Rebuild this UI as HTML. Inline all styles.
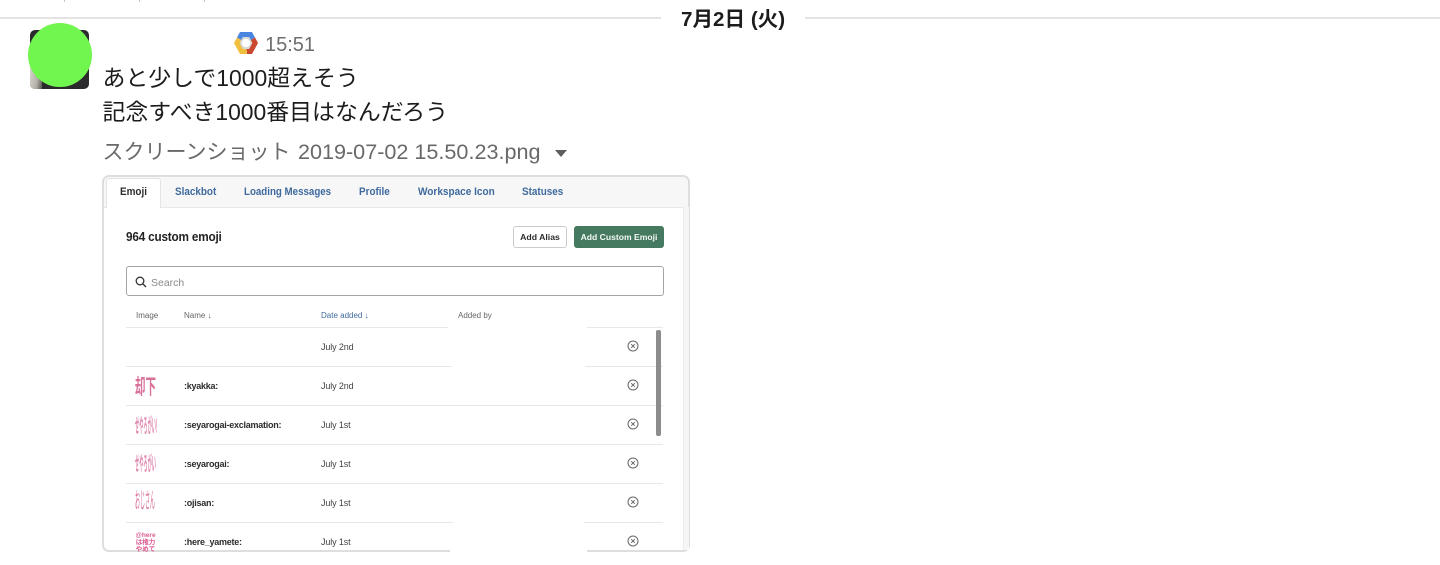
<!DOCTYPE html>
<html lang="ja"><head><meta charset="utf-8"><title>Slack message</title>
<style>
html,body{margin:0;padding:0;background:#fff}
#p{position:relative;width:1440px;height:565px;overflow:hidden;background:#fff;font-family:"Liberation Sans","Noto Sans CJK JP",sans-serif;color:#1d1c1d}
#p div{position:absolute;white-space:nowrap}
#s{left:0;top:0;width:1440px;height:565px;filter:blur(.3px)}
.l{height:1px;background:#e8e8e8}
.tab{top:185px;font-size:11px;line-height:15px;font-weight:bold;color:#3f6a9d;transform:scaleX(.9);transform-origin:0 0}
.t{font-size:8px;line-height:12px;color:#666}
.n{font-size:9px;line-height:12px;font-weight:bold;color:#2c2c2c;left:184px;letter-spacing:-.25px}
.d{font-size:9px;line-height:12px;color:#444;left:321px;letter-spacing:-.12px}
.e{left:135px;color:#d9709a;transform-origin:0 0;line-height:1}
.k{width:1px;height:2px;top:0;background:#c4c4c4}
</style></head><body>
<div id="p">
<div class="k" style="left:64px"></div><div class="k" style="left:139px"></div><div class="k" style="left:204px"></div>
<div style="left:0;top:17px;width:661px;height:2px;background:#e4e4e4"></div>
<div style="left:805px;top:17px;width:635px;height:2px;background:#e4e4e4"></div>
<div style="left:681px;top:6px;font-size:20.600px;line-height:27px;font-weight:bold;color:#1d1c1d">7月2日 (火)</div>
<div style="left:30px;top:30px;width:59px;height:59px;border-radius:5px;background:#2b2b2d"></div>
<div style="left:30px;top:66px;width:12px;height:23px;border-radius:0 0 0 5px;background:linear-gradient(100deg,#d8d6cf 0,#b4b1a8 60%,#55544f 100%)"></div>
<div style="left:27.500px;top:22.500px;width:64.500px;height:64.500px;border-radius:50%;background:#71f64f"></div>
<svg style="position:absolute;left:234px;top:32px" width="24" height="22" viewBox="0 0 24 22">
<path d="M6 0H18L21 5.500 12 11 3 5.500Z" fill="#4a86e0"/>
<path d="M21 5.500L24 11 18 22H13L12 11Z" fill="#c9482f"/>
<path d="M3 5.500L0 11 6 22H13L12 11Z" fill="#f0bf3e"/>
<path d="M8.800 5H15.200L18.400 11 15.200 17H8.800L5.600 11Z" fill="#d8d8d8"/>
<circle cx="12" cy="11" r="4.200" fill="#fff"/>
</svg>
<div style="left:265px;top:33px;font-size:20px;line-height:25px;color:#6f6e6f">15:51</div>
<div style="left:102.500px;top:61px;font-size:22.900px;line-height:34px;color:#1d1c1d">あと少しで1000超えそう<br>記念すべき1000番目はなんだろう</div>
<div style="left:102.500px;top:137px;font-size:21.600px;line-height:30px;color:#6a696a"><span style="font-size:21px;margin-right:1.500px">スクリーンショット</span> 2019-07-02 15.50.23.png</div>
<svg style="position:absolute;left:555px;top:150px" width="12" height="8"><path d="M0 0H12L6 7Z" fill="#5f5e5f"/></svg>

<div id="s">
<div style="left:102px;top:175px;width:584px;height:373px;border:2px solid #dedede;border-radius:7px;background:#fff;overflow:hidden"></div>
<div style="left:104px;top:177px;width:584px;height:30px;background:#f7f7f7;border-radius:5px 5px 0 0"></div>
<div style="left:104px;top:207px;width:580px;height:1px;background:#e8e8e8"></div>
<div style="left:683px;top:207px;width:5px;height:343px;background:#f6f6f6;border-left:1px solid #ececec"></div>
<div style="left:106px;top:178px;width:55px;height:30px;background:#fff;border:1px solid #e4e4e4;border-bottom:0;border-radius:3px 3px 0 0;box-sizing:border-box"></div>
<div class="tab" style="left:120px;color:#2c2c2c">Emoji</div>
<div class="tab" style="left:175px">Slackbot</div>
<div class="tab" style="left:244px;transform:scaleX(.885)">Loading Messages</div>
<div class="tab" style="left:359px">Profile</div>
<div class="tab" style="left:418px;transform:scaleX(.912)">Workspace Icon</div>
<div class="tab" style="left:522px">Statuses</div>
<div style="left:126px;top:229px;font-size:12.500px;line-height:16px;font-weight:bold;color:#222;letter-spacing:-.2px;transform:scaleX(.94);transform-origin:0 0">964 custom emoji</div>
<div style="left:513px;top:226px;width:54px;height:22px;box-sizing:border-box;border:1px solid #ccc;border-radius:3px;background:#fff;font-size:8.700px;line-height:21px;font-weight:bold;text-align:center;color:#2c2c2c">Add Alias</div>
<div style="left:574px;top:226px;width:90px;height:22px;border-radius:3px;background:#457a60;font-size:8.600px;line-height:23px;font-weight:bold;text-align:center;color:#f4f8f5">Add Custom Emoji</div>
<div style="left:126px;top:266px;width:538px;height:30px;box-sizing:border-box;border:1px solid #a5a5a5;border-radius:3px;background:#fff"></div>
<svg style="position:absolute;left:135px;top:276px" width="12" height="12" viewBox="0 0 12 12" fill="none" stroke="#333" stroke-width="1.300"><circle cx="5" cy="5" r="3.800"/><path d="M8 8L11 11"/></svg>
<div style="left:151px;top:276px;font-size:10.500px;line-height:14px;color:#8a8a8a">Search</div>
<div class="t" style="left:136px;top:310px">Image</div>
<div class="t" style="left:184px;top:310px">Name ↓</div>
<div class="t" style="left:321px;top:310px;color:#3f6a9d">Date added ↓</div>
<div class="t" style="left:458px;top:310px">Added by</div>

<div class="l" style="left:126px;top:327px;width:322px"></div><div class="l" style="left:587px;top:327px;width:76px"></div>
<div class="l" style="left:126px;top:366px;width:326px"></div><div class="l" style="left:585px;top:366px;width:78px"></div>
<div class="l" style="left:126px;top:405px;width:537px"></div>
<div class="l" style="left:126px;top:444px;width:537px"></div>
<div class="l" style="left:126px;top:483px;width:537px"></div>
<div class="l" style="left:126px;top:522px;width:327px"></div><div class="l" style="left:584px;top:522px;width:79px"></div>

<div class="e" style="top:378px;font-size:10.500px;transform:scale(1,2);font-weight:bold">却下</div>
<div class="e" style="top:418px;font-size:4.200px;transform:scale(1,4.800);color:#e08ab0;font-weight:bold">せやろがい!</div>
<div class="e" style="top:456px;font-size:4.200px;transform:scale(1,4.800);color:#e08ab0;font-weight:bold">せやろがい</div>
<div class="e" style="top:495px;font-size:5px;transform:scale(1,4.400)">おじさん</div>
<div class="e" style="top:532px;left:135.500px;font-size:6.500px;line-height:7px;color:#dc5a90;font-weight:bold;text-align:center">@here<br>は権力<br>やめて</div>

<div class="n" style="top:380px">:kyakka:</div>
<div class="n" style="top:419px">:seyarogai-exclamation:</div>
<div class="n" style="top:458px">:seyarogai:</div>
<div class="n" style="top:497px">:ojisan:</div>
<div class="n" style="top:536px">:here_yamete:</div>
<div class="d" style="top:341px">July 2nd</div>
<div class="d" style="top:380px">July 2nd</div>
<div class="d" style="top:419px">July 1st</div>
<div class="d" style="top:458px">July 1st</div>
<div class="d" style="top:497px">July 1st</div>
<div class="d" style="top:536px">July 1st</div>

<svg style="position:absolute;left:627px;top:340px" width="12" height="208" viewBox="0 0 12 208" fill="none" stroke="#666" stroke-width="1">
<g><circle cx="6" cy="6" r="5"/><path d="M4.200 4.200L7.800 7.800M7.800 4.200L4.200 7.800"/></g>
<g transform="translate(0,39)"><circle cx="6" cy="6" r="5"/><path d="M4.200 4.200L7.800 7.800M7.800 4.200L4.200 7.800"/></g>
<g transform="translate(0,78)"><circle cx="6" cy="6" r="5"/><path d="M4.200 4.200L7.800 7.800M7.800 4.200L4.200 7.800"/></g>
<g transform="translate(0,117)"><circle cx="6" cy="6" r="5"/><path d="M4.200 4.200L7.800 7.800M7.800 4.200L4.200 7.800"/></g>
<g transform="translate(0,156)"><circle cx="6" cy="6" r="5"/><path d="M4.200 4.200L7.800 7.800M7.800 4.200L4.200 7.800"/></g>
<g transform="translate(0,195)"><circle cx="6" cy="6" r="5"/><path d="M4.200 4.200L7.800 7.800M7.800 4.200L4.200 7.800"/></g>
</svg>
<div style="left:656px;top:330px;width:5px;height:106px;border-radius:2px;background:#8c8c8c"></div>
<div style="left:450px;top:550px;width:137px;height:3px;background:#fff"></div>
</div>
</div>
</body></html>
